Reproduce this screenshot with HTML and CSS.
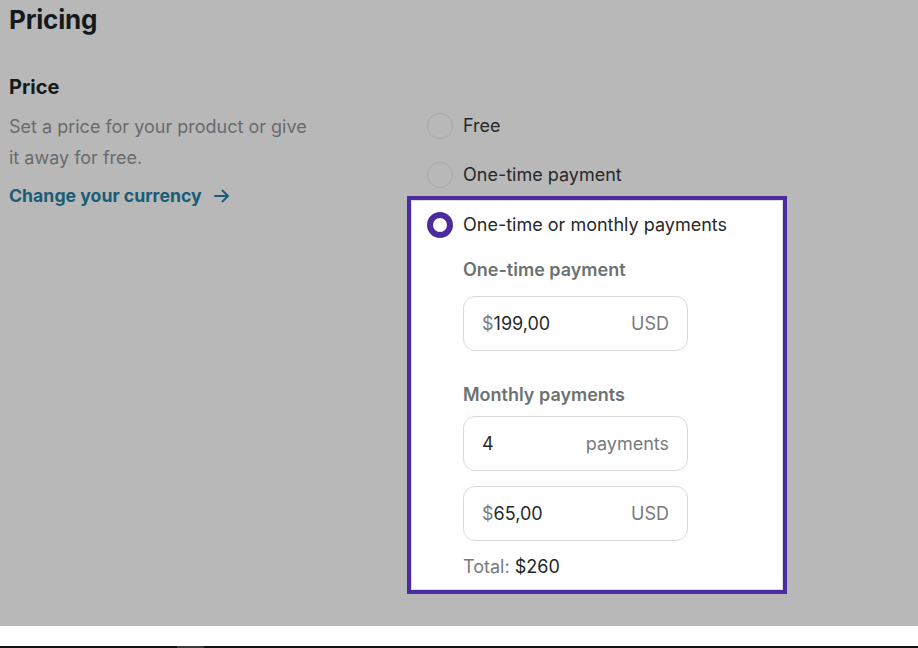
FILE: index.html
```html
<!DOCTYPE html>
<html lang="en">
<head>
<meta charset="utf-8">
<title>Pricing</title>
<link rel="stylesheet" href="styles.css">
</head>
<body>
<div class="page">
  <h1 class="title">Pricing</h1>
  <div class="row">
    <div class="left">
      <h2 class="subtitle">Price</h2>
      <p class="desc">Set a price for your product or give it away for free.</p>
      <a class="link" href="#">Change your currency
        <svg class="arrow" width="18" height="16" viewBox="0 0 18 16" aria-hidden="true"><path d="M2 8h13M9.5 2.5 15 8l-5.5 5.5" fill="none" stroke="currentColor" stroke-width="2" stroke-linecap="round" stroke-linejoin="round"/></svg>
      </a>
    </div>
    <div class="right">
      <div class="opt opt-free"><span class="radio"></span><span class="opt-label">Free</span></div>
      <div class="opt opt-one"><span class="radio"></span><span class="opt-label">One-time payment</span></div>
      <div class="box">
        <div class="opt"><span class="radio radio-on"></span><span class="opt-label">One-time or monthly payments</span></div>
        <div class="sub">
          <div class="field-label fl-first">One-time payment</div>
          <div class="input"><span class="val"><span class="muted">$</span>199,00</span><span class="muted">USD</span></div>
          <div class="field-label fl-second">Monthly payments</div>
          <div class="input"><span class="val">4</span><span class="muted">payments</span></div>
          <div class="input input-gap"><span class="val"><span class="muted">$</span>65,00</span><span class="muted">USD</span></div>
          <div class="total"><span class="muted">Total:</span> $260</div>
        </div>
      </div>
    </div>
  </div>
</div>
<div class="footer"></div>
<div class="bottom-line"></div>
</body>
</html>
```
FILE: styles.css
```css
* { box-sizing: border-box; }
html, body { margin: 0; padding: 0; }
body {
  font-family: Inter, "Noto Sans", "Liberation Sans", sans-serif;
  background: #ffffff;
  color: #1f2326;
}
.page {
  background: #b8b8b8;
  height: 626px;
  padding: 0 9px;
  overflow: hidden;
}
.title {
  margin: 0;
  padding-top: 4px;
  font-size: 26px;
  line-height: 32px;
  font-weight: 700;
  color: #15191c;
  letter-spacing: -0.2px;
}
.row {
  display: flex;
  margin-top: 39px;
}
.left {
  flex: none;
  width: 398px;
}
.subtitle {
  margin: 0;
  font-size: 20px;
  line-height: 24px;
  font-weight: 700;
  color: #15191c;
}
.desc {
  margin: 12px 0 0;
  width: 305px;
  font-size: 18px;
  line-height: 31px;
  color: #696b6d;
}
.link {
  display: flex;
  align-items: center;
  gap: 11px;
  margin-top: 11px;
  font-size: 17.7px;
  line-height: 24px;
  font-weight: 700;
  color: #1b5d77;
  text-decoration: none;
}
.arrow { flex: none; }
.right {
  flex: none;
  width: 380px;
  padding-top: 38px;
}
.opt {
  display: flex;
  align-items: center;
  gap: 10px;
  height: 26px;
}
.opt-free, .opt-one { padding-left: 20px; }
.opt-one { margin-top: 23px; }
.radio {
  flex: none;
  width: 26px;
  height: 26px;
  border-radius: 50%;
  border: 1px solid #a6a6a6;
}
.radio-on {
  border: 6px solid #4b2c9f;
  background: #ffffff;
}
.opt-label {
  font-size: 18px;
  line-height: 24px;
  color: #26292b;
}
.box {
  margin-top: 8px;
  width: 380px;
  border: 4px solid #4b2c9f;
  background: #ffffff;
  box-shadow: inset 0 0 0 1px #dcdcdc;
  padding: 12px 16px 11px;
}
.sub {
  padding-left: 36px;
}
.field-label {
  font-size: 18px;
  line-height: 24px;
  font-weight: 600;
  color: #6b7273;
}
.fl-first { margin-top: 20px; }
.fl-second { margin-top: 32px; }
.input {
  display: flex;
  align-items: center;
  justify-content: space-between;
  width: 225px;
  height: 55px;
  margin-top: 14px;
  padding: 0 18px;
  border: 1px solid #dadada;
  border-radius: 12px;
  background: #ffffff;
  font-size: 18px;
  color: #26292b;
}
.fl-second + .input { margin-top: 9px; }
.input-gap { margin-top: 15px; }
.muted { color: #777b7d; }
.total {
  margin-top: 14px;
  font-size: 18px;
  line-height: 24px;
  color: #222528;
}
.footer {
  height: 20px;
  background: #ffffff;
}
.bottom-line {
  height: 2px;
  background: linear-gradient(to right, #111111 0, #111111 177px, #3a3a3a 177px, #3a3a3a 204px, #111111 204px);
}
```
